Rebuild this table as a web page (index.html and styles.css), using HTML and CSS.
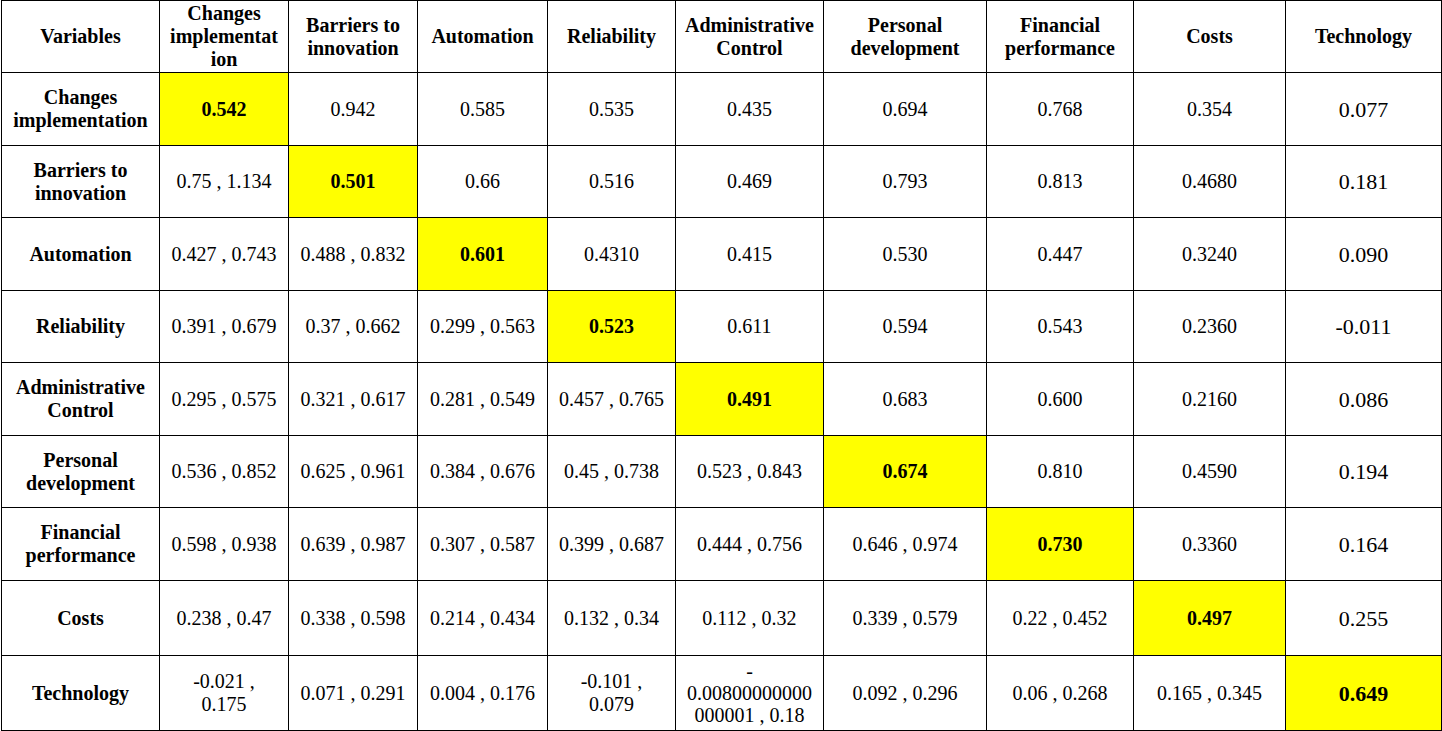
FILE: index.html
```html
<!DOCTYPE html>
<html>
<head>
<meta charset="utf-8">
<link rel="stylesheet" href="styles.css">
</head>
<body>
<table class="matrix">
<colgroup>
<col class="c0"><col class="c1"><col class="c2"><col class="c3"><col class="c4"><col class="c5"><col class="c6"><col class="c7"><col class="c8"><col class="c9">
</colgroup>
<thead>
<tr class="r-head">
<th>Variables</th>
<th>Changes implementat ion</th>
<th>Barriers to innovation</th>
<th>Automation</th>
<th>Reliability</th>
<th>Administrative Control</th>
<th>Personal development</th>
<th>Financial performance</th>
<th>Costs</th>
<th>Technology</th>
</tr>
</thead>
<tbody>
<tr class="r-a">
<th>Changes implementation</th>
<td class="diag">0.542</td><td>0.942</td><td>0.585</td><td>0.535</td><td>0.435</td><td>0.694</td><td>0.768</td><td>0.354</td><td class="tech">0.077</td>
</tr>
<tr class="r-b">
<th>Barriers to innovation</th>
<td>0.75 , 1.134</td><td class="diag">0.501</td><td>0.66</td><td>0.516</td><td>0.469</td><td>0.793</td><td>0.813</td><td>0.4680</td><td class="tech">0.181</td>
</tr>
<tr class="r-a">
<th>Automation</th>
<td>0.427 , 0.743</td><td>0.488 , 0.832</td><td class="diag">0.601</td><td>0.4310</td><td>0.415</td><td>0.530</td><td>0.447</td><td>0.3240</td><td class="tech">0.090</td>
</tr>
<tr class="r-b">
<th>Reliability</th>
<td>0.391 , 0.679</td><td>0.37 , 0.662</td><td>0.299 , 0.563</td><td class="diag">0.523</td><td>0.611</td><td>0.594</td><td>0.543</td><td>0.2360</td><td class="tech">-0.011</td>
</tr>
<tr class="r-a">
<th>Administrative Control</th>
<td>0.295 , 0.575</td><td>0.321 , 0.617</td><td>0.281 , 0.549</td><td>0.457 , 0.765</td><td class="diag">0.491</td><td>0.683</td><td>0.600</td><td>0.2160</td><td class="tech">0.086</td>
</tr>
<tr class="r-b">
<th>Personal development</th>
<td>0.536 , 0.852</td><td>0.625 , 0.961</td><td>0.384 , 0.676</td><td>0.45 , 0.738</td><td>0.523 , 0.843</td><td class="diag">0.674</td><td>0.810</td><td>0.4590</td><td class="tech">0.194</td>
</tr>
<tr class="r-a">
<th>Financial performance</th>
<td>0.598 , 0.938</td><td>0.639 , 0.987</td><td>0.307 , 0.587</td><td>0.399 , 0.687</td><td>0.444 , 0.756</td><td>0.646 , 0.974</td><td class="diag">0.730</td><td>0.3360</td><td class="tech">0.164</td>
</tr>
<tr class="r-c">
<th>Costs</th>
<td>0.238 , 0.47</td><td>0.338 , 0.598</td><td>0.214 , 0.434</td><td>0.132 , 0.34</td><td>0.112 , 0.32</td><td>0.339 , 0.579</td><td>0.22 , 0.452</td><td class="diag">0.497</td><td class="tech">0.255</td>
</tr>
<tr class="r-c">
<th>Technology</th>
<td>-0.021 ,<br>0.175</td><td>0.071 , 0.291</td><td>0.004 , 0.176</td><td>-0.101 ,<br>0.079</td><td class="tight">-<br>0.00800000000<br>000001 , 0.18</td><td>0.092 , 0.296</td><td>0.06 , 0.268</td><td>0.165 , 0.345</td><td class="diag tech">0.649</td>
</tr>
</tbody>
</table>
</body>
</html>
```

FILE: styles.css
```css
html, body {
  margin: 0;
  padding: 0;
  background: #ffffff;
}

body {
  padding-left: 1px;
  font-family: "Liberation Serif", "Times New Roman", serif;
  color: #000000;
}

.matrix {
  border-collapse: collapse;
  table-layout: fixed;
  width: 1440px;
}

.c0 { width: 158px; }
.c1 { width: 129px; }
.c2 { width: 129px; }
.c3 { width: 130px; }
.c4 { width: 128px; }
.c5 { width: 148px; }
.c6 { width: 163px; }
.c7 { width: 147px; }
.c8 { width: 152px; }
.c9 { width: 156px; }

.matrix th,
.matrix td {
  border: 1px solid #000000;
  text-align: center;
  vertical-align: middle;
  padding: 0 6px;
  font-size: 20px;
  line-height: 23px;
}

.matrix th {
  font-weight: bold;
}

.matrix td {
  font-weight: normal;
}

.r-head { height: 72px; }
.r-a { height: 73px; }
.r-b { height: 72px; }
.r-c { height: 75px; }

.matrix td.diag {
  background: #ffff00;
  font-weight: bold;
}

.matrix td.tech {
  font-size: 22px;
}

.matrix td.tight {
  line-height: 22px;
}
```
